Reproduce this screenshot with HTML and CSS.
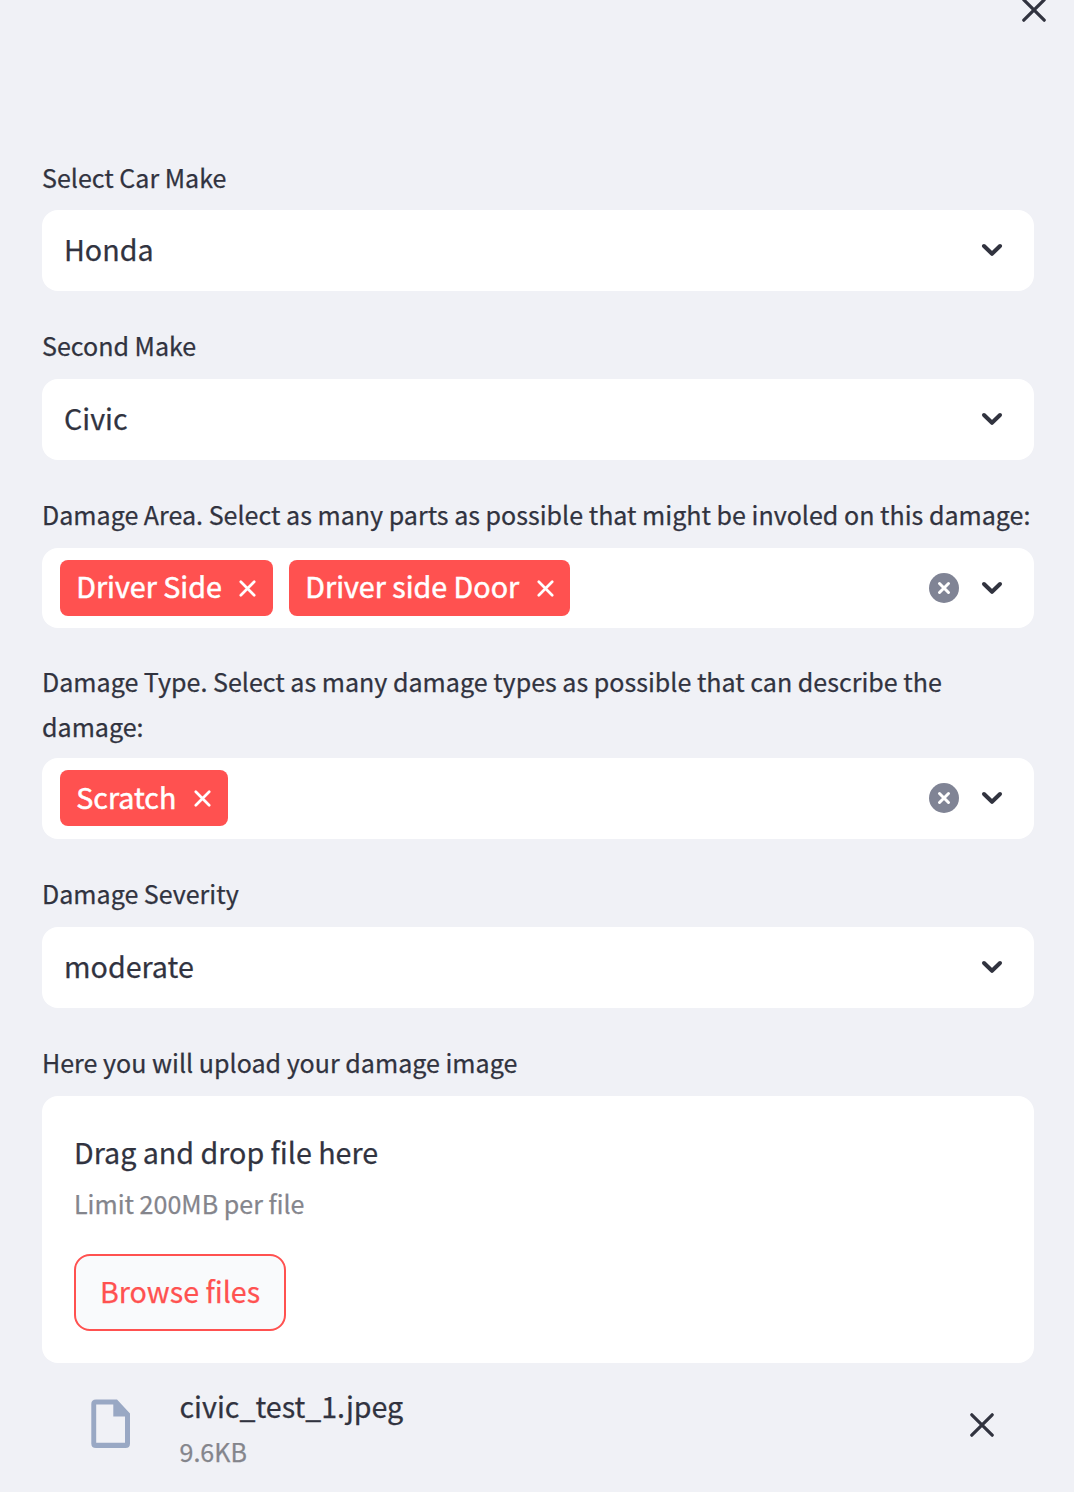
FILE: index.html
```html
<!DOCTYPE html>
<html lang="en">
<head>
<meta charset="utf-8">
<title>Damage report</title>
<link rel="stylesheet" href="styles.css">
</head>
<body>
<svg class="defs" aria-hidden="true">
  <symbol id="chevron" viewBox="0 0 22 14"><path d="M3 3 L11 10.800 L19 3" fill="none" stroke="currentColor" stroke-width="4" stroke-linecap="round" stroke-linejoin="round"/></symbol>
  <symbol id="cross" viewBox="0 0 24 24"><path d="M1.800 1.800 L22.200 22.200 M22.200 1.800 L1.800 22.200" fill="none" stroke="currentColor" stroke-width="3.200" stroke-linecap="round"/></symbol>
  <symbol id="tag-cross" viewBox="0 0 17 17"><path d="M1.800 1.800 L15.200 15.200 M15.200 1.800 L1.800 15.200" fill="none" stroke="currentColor" stroke-width="2.700" stroke-linecap="round"/></symbol>
  <symbol id="clear" viewBox="0 0 30 30"><circle cx="15" cy="15" r="15" fill="#808495"/><path d="M10.500 10.500 L19.500 19.500 M19.500 10.500 L10.500 19.500" fill="none" stroke="#fff" stroke-width="3" stroke-linecap="round"/></symbol>
</svg>
<aside class="sidebar">
  <button class="close" aria-label="Close"><svg class="cross"><use href="#cross"/></svg></button>
  <section class="field make">
    <div class="label">Select Car Make</div>
    <div class="select"><span class="value">Honda</span><svg class="chevron"><use href="#chevron"/></svg></div>
  </section>
  <section class="field">
    <div class="label">Second Make</div>
    <div class="select"><span class="value">Civic</span><svg class="chevron"><use href="#chevron"/></svg></div>
  </section>
  <section class="field area">
    <div class="label">Damage Area. Select as many parts as possible that might be involed on this damage:</div>
    <div class="select multi">
      <span class="tag"><span class="tag-text">Driver Side</span><svg class="tag-cross"><use href="#tag-cross"/></svg></span>
      <span class="tag"><span class="tag-text">Driver side Door</span><svg class="tag-cross"><use href="#tag-cross"/></svg></span>
      <svg class="clear"><use href="#clear"/></svg><svg class="chevron"><use href="#chevron"/></svg>
    </div>
  </section>
  <section class="field type">
    <div class="label">Damage Type. Select as many damage types as possible that can describe the<br>damage:</div>
    <div class="select multi">
      <span class="tag"><span class="tag-text">Scratch</span><svg class="tag-cross"><use href="#tag-cross"/></svg></span>
      <svg class="clear"><use href="#clear"/></svg><svg class="chevron"><use href="#chevron"/></svg>
    </div>
  </section>
  <section class="field">
    <div class="label">Damage Severity</div>
    <div class="select"><span class="value">moderate</span><svg class="chevron"><use href="#chevron"/></svg></div>
  </section>
  <section class="field">
    <div class="label">Here you will upload your damage image</div>
    <div class="dropzone">
      <div class="drop-title">Drag and drop file here</div>
      <div class="drop-limit">Limit 200MB per file</div>
      <button class="browse">Browse files</button>
    </div>
  </section>
  <div class="file">
    <svg class="file-icon" viewBox="0 0 40 48"><path d="M6 -0.500H27L40 13.500V43.500Q40 48 35.500 48H6Q1.300 48 1.300 43.500V4Q1.300 -0.500 6 -0.500ZM6.200 4.600V42.800H35V16.500H23.300V4.600Z" fill="#99a8c4" fill-rule="evenodd"/></svg>
    <div class="file-info"><div class="file-name">civic_test_1.jpeg</div><div class="file-size">9.6KB</div></div>
    <svg class="cross"><use href="#cross"/></svg>
  </div>
</aside>
</body>
</html>
```
FILE: styles.css
```css
* { box-sizing: border-box; }
body { margin: 0; background: #f0f1f6; color: #31333f; font-family: "Noto Sans CJK SC", "Noto Sans", sans-serif; font-size: 28.650px; -webkit-text-stroke: 0.250px currentColor; }
button { font: inherit; border: 0; background: none; padding: 0; color: inherit; }
svg { display: block; flex: none; overflow: visible; }
.defs { width: 0; height: 0; position: absolute; }
.sidebar { height: 1492px; overflow: hidden; padding: 0 40px 0 42px; }
.close { display: block; height: 22px; margin: 0 -12px 133px auto; }
.close .cross { margin-top: -2px; }
.cross { width: 24px; height: 24px; }
.field { margin-bottom: 32px; }
.area { margin-bottom: 31px; }
.label { font-size: 25.060px; line-height: 45px; height: 56px; white-space: nowrap; }
.make .label { height: 55px; }
.type .label { height: 99px; }
.select { height: 81px; border-radius: 16px; background: #fff; display: flex; align-items: center; padding: 0 31px 2px 22px; }
.value { line-height: 44px; margin: -2px auto 0 0; }
.chevron { width: 22px; height: 14px; }
.multi { padding: 0 31px 1px 18px; }
.multi .chevron { margin-top: -1px; }
.area .multi { height: 80px; padding-bottom: 0; }
.tag { height: 56px; border-radius: 8px; background: #ff5150; color: #fff; display: flex; align-items: center; padding: 0 16.800px 0 16.300px; margin-right: 16px; gap: 17.500px; white-space: nowrap; }
.tag-text { line-height: 52px; margin-top: -4px; -webkit-text-stroke-width: 0.500px; }
.type .tag-text { margin-top: -2px; }
.tag-cross { width: 17px; height: 17px; margin-top: 1px; }
.clear { width: 30px; height: 30px; margin: 0 22px 0 auto; }
.dropzone { height: 267px; border-radius: 16px; background: #fff; padding: 32px; }
.drop-title { line-height: 47px; }
.drop-limit { font-size: 25.060px; line-height: 45px; margin-top: 6px; color: #84858c; }
.browse { display: block; width: 212px; height: 77px; margin-top: 28px; padding-bottom: 4px; border: 2px solid #ff5150; border-radius: 16px; background: #f9fafc; color: #ff5150; }
.file { display: flex; padding: 0 40px 0 48px; margin-top: -32px; }
.file-icon { width: 40px; height: 48px; margin: 37px 49.500px 0 0; }
.file-info { margin-right: auto; padding-top: 18px; }
.file-name { line-height: 50px; }
.file-size { font-size: 25.060px; line-height: 40px; color: #84858c; }
.file .cross { margin-top: 50px; }
```
